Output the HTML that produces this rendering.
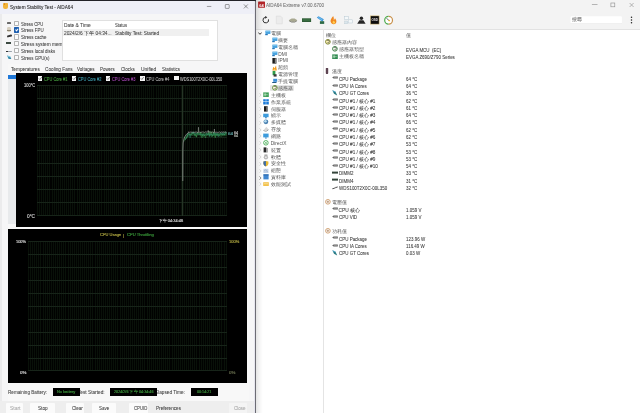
<!DOCTYPE html>
<html><head><meta charset="utf-8">
<style>
*{margin:0;padding:0;box-sizing:border-box}
html,body{width:640px;height:413px;overflow:hidden;background:#222228;font-family:"Liberation Sans",sans-serif}
.a{position:absolute}
.t{position:absolute;white-space:nowrap;line-height:1;color:#1b1b1b;-webkit-text-stroke:0.06px currentColor}
#lw{left:0;top:0;width:256px;height:413px;overflow:hidden;will-change:transform}
#rw{left:256px;top:0;width:384px;height:413px;background:#fff;overflow:hidden;will-change:transform}
.cb{position:absolute;width:5.1px;height:5.3px;border:0.5px solid #b4b4b4;background:#fbfbfb;border-radius:0.8px}
.gcb{position:absolute;width:4.3px;height:4.6px;background:#f4f4f4}
.gcb:after{content:"";position:absolute;left:1px;top:0.6px;width:1.6px;height:2.6px;border-right:0.7px solid #222;border-bottom:0.7px solid #222;transform:rotate(40deg)}
.l{font-size:4.7px}
.g{font-size:3.95px}
.gt{-webkit-text-stroke:0.16px currentColor}
.r{font-size:4.5px;color:#222}
.tr{font-size:4.6px;color:#262626}
.chev{position:absolute;width:2.2px;height:2.2px;border-right:0.7px solid #555;border-bottom:0.7px solid #555}
.chev.dn{transform:rotate(45deg);border-color:#222}
.chev.rt{transform:rotate(-45deg);border-color:#b8b8b8}
.ic{position:absolute;display:block;width:5.2px;height:5px}
.ic-pc{background:linear-gradient(#3a9ad8,#3a9ad8) 0.4px 0.2px/4.4px 3.2px no-repeat,linear-gradient(#5aaee0,#5aaee0) 0 3.4px/3px 1px no-repeat}
.ic-ipmi{background:#1c1c1c;width:4.3px;left:0;}
.ic-oc{background:linear-gradient(135deg,transparent 35%,#f39a1e 36%);}
.ic-pow{background:linear-gradient(#2f9a48,#2f9a48) 0.6px 0/3px 5.4px no-repeat,linear-gradient(#4a4a4a,#4a4a4a) 2px 4px/3px 1.3px no-repeat}
.ic-lap{background:linear-gradient(#3a8ad8,#3a8ad8) 1px 0.6px/4px 3px no-repeat,linear-gradient(#204060,#204060) 0 3.8px/5px 0.9px no-repeat}
.ic-sens,.ic-g1,.ic-g2,.ic-volt{border-radius:50%;border:1.1px solid #6a8a3a;background:#fdf6c8}
.ic-g1{border-color:#7a8a2a}
.ic-g2{border-color:#3a7a40}
.ic-volt{border-color:#c89060;background:#fff}
.ic-mb,.ic-mbg{background:#3f9e58;box-shadow:inset 0 0 0 0.5px #2a7a40}
.ic-mbg{background:linear-gradient(#fff,#fff) 2px 0/0.6px 5px no-repeat,linear-gradient(#fff,#fff) 0 2.5px/5px 0.5px no-repeat,#2f8a50}
.ic-os{background:linear-gradient(#1a78d8,#1a78d8) 0 0/2.4px 2.3px no-repeat,linear-gradient(#1a78d8,#1a78d8) 2.8px 0/2.4px 2.3px no-repeat,linear-gradient(#1a78d8,#1a78d8) 0 2.7px/2.4px 2.3px no-repeat,linear-gradient(#1a78d8,#1a78d8) 2.8px 2.7px/2.4px 2.3px no-repeat}
.ic-srv{background:linear-gradient(90deg,#555 0,#222 30%,#111 100%);width:3.8px;left:0}
.ic-disp{background:linear-gradient(#3a9ad8,#3a9ad8) 0 0.6px/5.2px 3.4px no-repeat,linear-gradient(#2070a8,#2070a8) 1.5px 4px/2.2px 0.8px no-repeat}
.ic-mm{border-radius:50%;background:radial-gradient(circle at 40% 40%,#8ac0e0,#3a6a98 70%)}
.ic-stor{background:linear-gradient(160deg,transparent 40%,#aaa 42%,#666 100%)}
.ic-net{background:linear-gradient(#3a9ad8,#3a9ad8) 0 0.5px/5.2px 3.6px no-repeat,linear-gradient(#2a80b8,#2a80b8) 1.8px 4px/1.6px 1px no-repeat}
.ic-dx{border-radius:50%;border:0.8px solid #3aa84a;background:radial-gradient(circle,#fff 40%,#7cc878 42%,#fff 60%)}
.ic-dev{background:linear-gradient(90deg,#333 0,#333 55%,#999 56%);width:4.6px}
.ic-sw{background:radial-gradient(circle at 50% 60%,#888 0,#aaa 40%,transparent 55%)}
.ic-sec{background:linear-gradient(90deg,#3a6aa8 50%,#e8b830 50%);border-radius:0.5px 0.5px 2.6px 2.6px}
.ic-cfg{background:linear-gradient(135deg,#c8d4e8,#9ab0cc)}
.ic-db{background:#3f86d0;box-shadow:inset 0 1px 0 #2a6ab0}
.ic-bench{background:linear-gradient(#f5c85a,#f0b838);height:4.2px;margin-top:0.6px}
.ic-therm{width:2.8px;background:linear-gradient(#5e4452,#5e4452) 0.2px 0.1px/2.4px 5.6px no-repeat;border-radius:1.2px;height:5.8px}
.ic-cpu{width:5.8px;background:linear-gradient(#5c5c5c,#5c5c5c) 1.2px 1.7px/4.6px 1.3px no-repeat;clip-path:polygon(0 2.35px,1.6px 1.4px,5.8px 1.4px,5.8px 3.3px,1.6px 3.3px)}
.ic-gt{width:4.6px;background:linear-gradient(135deg,#4aa8d8 0,#3a90c0 50%,#2a6a70 51%,#2a6a70 100%);clip-path:polygon(0 0,60% 20%,100% 100%,40% 85%)}
.ic-dimm{width:6.2px;background:linear-gradient(#33443a,#33443a) 0 1.4px/6.2px 2px no-repeat}
.ic-disk{width:6px;background:linear-gradient(-20deg,transparent 38%,#3a3a3a 40%,#3a3a3a 55%,transparent 57%)}
.btn{position:absolute;height:10px;background:#fbfbfb;border-radius:1px}
</style></head><body>
<div id="lw" class="a">
<div class="a" style="left:0.00px;top:1.20px;width:256.00px;height:411.80px;background:#f6f6f7;border-top-right-radius:2.5px"></div>
<div class="a" style="left:0.00px;top:1.20px;width:256.00px;height:13.10px;background:#eeeff7;border-top-right-radius:2.5px"></div>
<div class="a" style="left:0.00px;top:14.30px;width:1.50px;height:398.70px;background:#ebebec"></div>
<div class="a" style="left:3.20px;top:3.40px;width:4.60px;height:5.20px;background:#f2b43a;border-radius:0.8px 0.8px 2px 2px"></div>
<div class="a" style="left:3.60px;top:3.00px;width:1.60px;height:2.00px;background:#e08a20;border-radius:0.5px"></div>
<div class="t " style="left:9.70px;top:6.32px;font-size:4.8px;color:#1b1b1b;transform:scaleX(0.974);transform-origin:0 50%">System Stability Test - AIDA64</div>
<svg class="a" style="left:200px;top:0" width="56" height="14" viewBox="200 0 56 14"><path d="M206.9 6.45H211.3" stroke="#444" stroke-width="0.5"/><rect x="225.3" y="4.5" width="3.9" height="3.9" rx="0.5" fill="none" stroke="#444" stroke-width="0.5"/><path d="M243.9 4.4L247.9 8.4M247.9 4.4L243.9 8.4" stroke="#444" stroke-width="0.55"/></svg>
<div class="a" style="left:6.70px;top:22.40px;width:4.80px;height:1.40px;background:#6a6a6a;border-radius:0.6px"></div>
<div class="a" style="left:6.90px;top:27.20px;width:4.40px;height:4.40px;background:#d6cfc0;border-radius:1.4px"></div>
<div class="a" style="left:7.20px;top:30.40px;width:3.80px;height:1.00px;background:#8a8270"></div>
<div class="a" style="left:6.60px;top:35.20px;width:4.80px;height:1.70px;background:#333;transform:rotate(-14deg);border-radius:0.8px"></div>
<div class="a" style="left:6.20px;top:42.10px;width:4.90px;height:2.40px;background:#3c4a42"></div>
<div class="a" style="left:6.30px;top:50.90px;width:5.30px;height:1.50px;background:#9aa4ac;border-radius:0.6px"></div>
<div class="a" style="left:6.30px;top:51.10px;width:2.10px;height:1.40px;background:#333"></div>
<svg class="a" style="left:6.6px;top:54.6px" width="5" height="4.8" viewBox="0 0 5 4.8"><path d="M0.2 0.4 L3.2 1.4 L4.6 4.6 L1.4 3.8 Z" fill="#3a8aa8"/><path d="M0.2 0.4 L3.2 1.4 L3.6 2.4 L0.6 1.6 Z" fill="#8ad0e8"/></svg>
<div class="cb" style="left:14.3px;top:20.50px"></div>
<div class="t " style="left:20.80px;top:22.53px;font-size:4.75px;color:#404040;transform:scaleX(0.895);transform-origin:0 50%">Stress CPU</div>
<div class="cb" style="left:14.3px;top:27.40px;background:#1e5fb0;border-color:#1e5fb0"></div>
<div class="a" style="left:15.8px;top:28.10px;width:1.6px;height:2.7px;border-right:0.7px solid #fff;border-bottom:0.7px solid #fff;transform:rotate(40deg)"></div>
<div class="t " style="left:20.80px;top:29.43px;font-size:4.75px;color:#404040;transform:scaleX(0.930);transform-origin:0 50%">Stress FPU</div>
<div class="cb" style="left:14.3px;top:34.30px"></div>
<div class="t " style="left:20.80px;top:36.33px;font-size:4.75px;color:#404040;transform:scaleX(0.930);transform-origin:0 50%">Stress cache</div>
<div class="cb" style="left:14.3px;top:41.10px"></div>
<div class="t " style="left:20.80px;top:43.13px;font-size:4.75px;color:#404040">Stress system memory</div>
<div class="cb" style="left:14.3px;top:47.80px"></div>
<div class="t " style="left:20.80px;top:49.83px;font-size:4.75px;color:#404040;transform:scaleX(0.930);transform-origin:0 50%">Stress local disks</div>
<div class="cb" style="left:14.3px;top:54.70px"></div>
<div class="t " style="left:20.80px;top:56.73px;font-size:4.75px;color:#404040;transform:scaleX(0.930);transform-origin:0 50%">Stress GPU(s)</div>
<div class="a" style="left:61.90px;top:20.00px;width:156.00px;height:41.00px;background:#fff;border:0.5px solid #e0e0e0"></div>
<div class="a" style="left:62.50px;top:29.00px;width:146.90px;height:6.60px;background:#f0f0f0"></div>
<div class="t " style="left:63.80px;top:24.33px;font-size:4.75px;color:#404040;transform:scaleX(1.023);transform-origin:0 50%">Date &amp; Time</div>
<div class="t " style="left:115.00px;top:24.33px;font-size:4.75px;color:#404040;transform:scaleX(0.891);transform-origin:0 50%">Status</div>
<div class="t " style="left:63.80px;top:32.33px;font-size:4.75px;color:#404040;transform:scaleX(1.011);transform-origin:0 50%">2024/2/6 下午 04:34...</div>
<div class="t " style="left:114.70px;top:32.33px;font-size:4.75px;color:#404040;transform:scaleX(0.988);transform-origin:0 50%">Stability Test: Started</div>
<div class="a" style="left:7.50px;top:72.00px;width:241.00px;height:329.00px;background:#f8f8f8"></div>
<div class="a" style="left:8.00px;top:63.50px;width:34.50px;height:8.50px;background:#f8f8f8"></div>
<div class="t " style="left:10.50px;top:67.73px;font-size:4.75px;color:#404040;transform:scaleX(0.991);transform-origin:0 50%">Temperatures</div>
<div class="t " style="left:44.70px;top:67.73px;font-size:4.75px;color:#404040;transform:scaleX(0.990);transform-origin:0 50%">Cooling Fans</div>
<div class="t " style="left:77.30px;top:67.73px;font-size:4.75px;color:#404040;transform:scaleX(0.968);transform-origin:0 50%">Voltages</div>
<div class="t " style="left:100.00px;top:67.73px;font-size:4.75px;color:#404040;transform:scaleX(0.928);transform-origin:0 50%">Powers</div>
<div class="t " style="left:120.60px;top:67.73px;font-size:4.75px;color:#404040;transform:scaleX(0.961);transform-origin:0 50%">Clocks</div>
<div class="t " style="left:140.90px;top:67.73px;font-size:4.75px;color:#404040;transform:scaleX(1.035);transform-origin:0 50%">Unified</div>
<div class="t " style="left:161.60px;top:67.73px;font-size:4.75px;color:#404040;transform:scaleX(0.947);transform-origin:0 50%">Statistics</div>
<div class="a" style="left:7.70px;top:75.00px;width:8.80px;height:4.00px;background:#1f78d8"></div>
<div class="a" style="left:7.70px;top:79.00px;width:8.80px;height:144.50px;background:#e8eaec"></div>
<div class="a" style="left:16.00px;top:72.50px;width:231.40px;height:154.30px;background:#000"></div>
<div class="a" style="left:36.80px;top:85.00px;width:190.50px;height:130.50px;background:transparent;background:repeating-linear-gradient(to bottom,#172419 0,#172419 0.8px,transparent 0.8px,transparent 13.050px),repeating-linear-gradient(to right,#091109 0,#091109 1px,#010201 1px,#010201 2.08px)"></div>
<div class="a" style="left:36.80px;top:214.70px;width:190.50px;height:0.80px;background:#172419"></div>
<div class="a" style="left:182.30px;top:85.00px;width:0.80px;height:130.50px;background:#263426"></div>
<svg class="a" style="left:0;top:0" width="256" height="240" viewBox="0 0 256 240">
<path d="M183.8 140 Q185.5 134.5 189 133 L189.00 132.45 L189.90 132.91 L190.80 132.75 L191.70 132.08 L192.60 132.05 L193.50 132.10 L194.40 132.59 L195.30 132.17 L196.20 132.88 L197.10 132.81 L198.00 133.37 L198.90 133.20 L199.80 132.20 L200.70 132.43 L201.60 132.25 L202.50 132.89 L203.40 132.77 L204.30 132.08 L205.20 132.95 L206.10 132.44 L207.00 132.63 L207.90 133.11 L208.80 132.34 L209.70 132.74 L210.60 133.02 L211.50 133.37 L212.40 132.59 L213.30 132.21 L214.20 132.05 L215.10 133.07 L216.00 133.23 L216.90 132.97 L217.80 132.81 L218.70 133.18 L219.60 132.66 L220.50 132.08 L221.40 132.91 L222.30 133.15 L223.20 132.54 L224.10 132.03 L225.00 132.24 L225.90 132.08 L226.80 132.18 L226.80 135.54 L225.90 136.69 L225.00 135.26 L224.10 136.02 L223.20 136.47 L222.30 135.63 L221.40 137.18 L220.50 136.54 L219.60 136.46 L218.70 137.08 L217.80 136.00 L216.90 136.31 L216.00 135.69 L215.10 136.26 L214.20 136.47 L213.30 136.08 L212.40 136.67 L211.50 135.26 L210.60 135.63 L209.70 136.93 L208.80 136.26 L207.90 136.54 L207.00 135.66 L206.10 136.29 L205.20 135.94 L204.30 135.45 L203.40 135.14 L202.50 135.82 L201.60 136.28 L200.70 136.80 L199.80 135.26 L198.90 135.64 L198.00 135.10 L197.10 135.87 L196.20 137.08 L195.30 135.49 L194.40 136.82 L193.50 135.20 L192.60 135.95 L191.70 136.12 L190.80 135.80 L189.90 135.16 L189.00 135.33 L189 136.5 Q186 138 184.2 142 Z" fill="#2a6e3a" opacity="0.6"/>
<path d="M185 140 L187 136.5 L188.00 134.36 L188.70 133.68 L189.40 134.71 L190.10 135.30 L190.80 134.11 L191.50 134.29 L192.20 133.85 L192.90 133.00 L193.60 133.51 L194.30 134.31 L195.00 135.60 L195.70 134.63 L196.40 137.16 L197.10 134.37 L197.80 132.13 L198.50 133.74 L199.20 133.73 L199.90 134.68 L200.60 132.31 L201.30 136.35 L202.00 137.73 L202.70 134.53 L203.40 136.45 L204.10 134.55 L204.80 136.39 L205.50 137.86 L206.20 135.40 L206.90 134.07 L207.60 133.87 L208.30 134.67 L209.00 131.35 L209.70 135.30 L210.40 134.00 L211.10 131.44 L211.80 136.80 L212.50 135.56 L213.20 135.60 L213.90 131.91 L214.60 134.56 L215.30 137.70 L216.00 133.69 L216.70 135.50 L217.40 135.15 L218.10 133.89 L218.80 134.23 L219.50 135.64 L220.20 134.38 L220.90 133.55 L221.60 134.80 L222.30 134.94 L223.00 134.81 L223.70 134.03 L224.40 135.26 L225.10 133.73 L225.80 133.81 L226.50 133.93" fill="none" stroke="#3c9a50" stroke-width="0.6"/>
<path d="M185.5 139.5 L187.5 136 L188.00 133.26 L188.70 134.20 L189.40 133.85 L190.10 137.89 L190.80 134.52 L191.50 134.23 L192.20 132.57 L192.90 133.24 L193.60 131.77 L194.30 134.15 L195.00 134.31 L195.70 134.24 L196.40 132.85 L197.10 133.75 L197.80 134.22 L198.50 134.72 L199.20 134.09 L199.90 134.21 L200.60 134.59 L201.30 134.27 L202.00 135.08 L202.70 134.95 L203.40 133.72 L204.10 135.09 L204.80 135.51 L205.50 134.54 L206.20 133.63 L206.90 133.44 L207.60 135.08 L208.30 133.93 L209.00 133.47 L209.70 136.47 L210.40 134.54 L211.10 134.61 L211.80 134.01 L212.50 135.45 L213.20 134.31 L213.90 133.24 L214.60 134.45 L215.30 133.33 L216.00 134.78 L216.70 133.41 L217.40 133.28 L218.10 136.69 L218.80 134.55 L219.50 134.01 L220.20 134.23 L220.90 133.85 L221.60 132.84 L222.30 134.88 L223.00 132.64 L223.70 133.88 L224.40 135.05 L225.10 133.46 L225.80 131.73 L226.50 133.56" fill="none" stroke="#3aa08a" stroke-width="0.5" opacity="0.8"/>
<path d="M182.8 181 L182.9 150 L183.2 143 Q183.8 135.5 188.5 132.6 L188.00 132.28 L188.70 132.02 L189.40 132.30 L190.10 132.38 L190.80 131.92 L191.50 132.20 L192.20 132.21 L192.90 132.17 L193.60 132.29 L194.30 132.23 L195.00 132.48 L195.70 132.03 L196.40 132.02 L197.10 132.34 L197.80 132.49 L198.50 132.40 L199.20 132.28 L199.90 132.16 L200.60 132.30 L201.30 132.20 L202.00 132.26 L202.70 131.93 L203.40 132.06 L204.10 132.12 L204.80 132.49 L205.50 131.92 L206.20 132.03 L206.90 132.10 L207.60 132.07 L208.30 132.05 L209.00 131.95 L209.70 131.99 L210.40 132.14 L211.10 132.28 L211.80 132.47 L212.50 131.99 L213.20 132.37 L213.90 132.36 L214.60 132.20 L215.30 132.27 L216.00 132.39 L216.70 132.21 L217.40 132.32 L218.10 132.45 L218.80 132.24 L219.50 131.91 L220.20 132.38 L220.90 132.47 L221.60 131.95 L222.30 132.28 L223.00 132.13 L223.70 131.93 L224.40 132.22 L225.10 132.06 L225.80 131.94 L226.50 132.44" fill="none" stroke="#b8bcb8" stroke-width="0.6"/>
<path d="M198.3 132 L198.5 127.2 L198.7 132 M214.2 132 L214.4 129 L214.6 132 M208 132 L208.2 130.2 L208.4 132" fill="none" stroke="#a8aca8" stroke-width="0.45"/>
</svg>
<div class="a" style="left:37.9px;top:75.9px;width:4.5px;height:4.7px;background:#f4f4f4"></div>
<svg class="a" style="left:37.9px;top:75.9px" width="4.5" height="4.7" viewBox="0 0 4.5 4.7"><path d="M0.9 2.4L1.9 3.5L3.7 1.1" fill="none" stroke="#3a3a3a" stroke-width="0.6"/></svg>
<div class="t gt" style="left:44.00px;top:77.75px;font-size:4.6px;color:#48a040;transform:scaleX(0.859);transform-origin:0 50%;-webkit-text-stroke:0.08px #48a040">CPU Core #1</div>
<div class="a" style="left:71.7px;top:75.9px;width:4.5px;height:4.7px;background:#f4f4f4"></div>
<svg class="a" style="left:71.7px;top:75.9px" width="4.5" height="4.7" viewBox="0 0 4.5 4.7"><path d="M0.9 2.4L1.9 3.5L3.7 1.1" fill="none" stroke="#3a3a3a" stroke-width="0.6"/></svg>
<div class="t gt" style="left:78.10px;top:77.75px;font-size:4.6px;color:#40a0b0;transform:scaleX(0.859);transform-origin:0 50%;-webkit-text-stroke:0.08px #40a0b0">CPU Core #2</div>
<div class="a" style="left:105.89999999999999px;top:75.9px;width:4.5px;height:4.7px;background:#f4f4f4"></div>
<svg class="a" style="left:105.89999999999999px;top:75.9px" width="4.5" height="4.7" viewBox="0 0 4.5 4.7"><path d="M0.9 2.4L1.9 3.5L3.7 1.1" fill="none" stroke="#3a3a3a" stroke-width="0.6"/></svg>
<div class="t gt" style="left:112.40px;top:77.75px;font-size:4.6px;color:#a848b8;transform:scaleX(0.859);transform-origin:0 50%;-webkit-text-stroke:0.08px #a848b8">CPU Core #3</div>
<div class="a" style="left:140.20000000000002px;top:75.9px;width:4.5px;height:4.7px;background:#f4f4f4"></div>
<svg class="a" style="left:140.20000000000002px;top:75.9px" width="4.5" height="4.7" viewBox="0 0 4.5 4.7"><path d="M0.9 2.4L1.9 3.5L3.7 1.1" fill="none" stroke="#3a3a3a" stroke-width="0.6"/></svg>
<div class="t gt" style="left:146.00px;top:77.75px;font-size:4.6px;color:#b0b0b0;transform:scaleX(0.859);transform-origin:0 50%;-webkit-text-stroke:0.08px #b0b0b0">CPU Core #4</div>
<div class="a" style="left:174.30px;top:75.90px;width:4.30px;height:4.60px;background:#f4f4f4"></div>
<div class="t gt" style="left:179.80px;top:77.75px;font-size:4.6px;color:#c0c0c0;transform:scaleX(0.853);transform-origin:0 50%;-webkit-text-stroke:0.08px #c0c0c0">WDS100T2X0C-00L350</div>
<div class="t gt" style="left:23.70px;top:84.20px;font-size:4.6px;color:#c8c8c8;transform:scaleX(0.873);transform-origin:0 50%">100°C</div>
<div class="t gt" style="left:27.00px;top:214.55px;font-size:4.6px;color:#c8c8c8;transform:scaleX(1.036);transform-origin:0 50%">0°C</div>
<div class="t gt" style="left:158.60px;top:218.91px;font-size:4.2px;color:#d0d0d0;transform:scaleX(0.949);transform-origin:0 50%">下午 04:34:46</div>
<div class="t gt" style="left:228.10px;top:132.72px;font-size:3.4px;color:#5a9a9a;transform:scaleX(1.375);transform-origin:0 50%">64</div>
<div class="t gt" style="left:233.80px;top:131.55px;font-size:3.2px;color:#b8b8b8;transform:scaleX(1.180);transform-origin:0 50%">64</div>
<div class="t gt" style="left:233.80px;top:134.95px;font-size:3.2px;color:#a0a8a0;transform:scaleX(1.180);transform-origin:0 50%">64</div>
<div class="a" style="left:7.50px;top:228.50px;width:239.90px;height:154.30px;background:#000"></div>
<div class="a" style="left:28.00px;top:240.50px;width:199.30px;height:130.50px;background:transparent;background:repeating-linear-gradient(to bottom,#172419 0,#172419 0.8px,transparent 0.8px,transparent 13.050px),repeating-linear-gradient(to right,#091109 0,#091109 1px,#010201 1px,#010201 2.08px)"></div>
<div class="a" style="left:28.00px;top:370.20px;width:199.30px;height:0.80px;background:#172419"></div>
<div class="t gt" style="left:100.40px;top:233.49px;font-size:4.3px;color:#b0a840;transform:scaleX(0.929);transform-origin:0 50%">CPU Usage</div>
<div class="t gt" style="left:122.80px;top:233.54px;font-size:3.95px;color:#b0a840">|</div>
<div class="t gt" style="left:127.00px;top:233.49px;font-size:4.3px;color:#3a9a3a;transform:scaleX(0.950);transform-origin:0 50%">CPU Throttling</div>
<div class="t gt" style="left:16.20px;top:240.39px;font-size:4.3px;color:#d8d8d8;transform:scaleX(0.900);transform-origin:0 50%">100%</div>
<div class="t gt" style="left:229.00px;top:239.99px;font-size:4.3px;color:#b0a840;transform:scaleX(0.927);transform-origin:0 50%">100%</div>
<div class="t gt" style="left:19.90px;top:370.69px;font-size:4.3px;color:#d8d8d8;transform:scaleX(1.030);transform-origin:0 50%">0%</div>
<div class="t gt" style="left:229.00px;top:370.69px;font-size:4.3px;color:#6a7050;transform:scaleX(1.030);transform-origin:0 50%">0%</div>
<div class="t " style="left:7.70px;top:390.93px;font-size:4.75px;color:#404040;transform:scaleX(0.968);transform-origin:0 50%">Remaining Battery:</div>
<div class="t " style="left:77.60px;top:390.93px;font-size:4.75px;color:#404040;transform:scaleX(0.997);transform-origin:0 50%">Test Started:</div>
<div class="t " style="left:155.30px;top:390.93px;font-size:4.75px;color:#404040;transform:scaleX(0.995);transform-origin:0 50%">Elapsed Time:</div>
<div class="a" style="left:52.50px;top:387.80px;width:27.30px;height:7.80px;background:#000"></div>
<div class="t gt" style="left:56.90px;top:391.28px;font-size:3.7px;color:#3a923a;transform:scaleX(1.072);transform-origin:0 50%">No battery</div>
<div class="a" style="left:110.20px;top:387.80px;width:46.80px;height:7.80px;background:#000"></div>
<div class="t gt" style="left:114.20px;top:391.31px;font-size:3.5px;color:#3a923a;transform:scaleX(1.061);transform-origin:0 50%">2024/2/6 下午 04:34:46</div>
<div class="a" style="left:190.60px;top:387.80px;width:27.40px;height:7.80px;background:#000"></div>
<div class="t gt" style="left:197.10px;top:391.28px;font-size:3.7px;color:#3a923a;transform:scaleX(0.993);transform-origin:0 50%">00:14:21</div>
<div class="a" style="left:0.00px;top:400.50px;width:255.20px;height:12.50px;background:#eeeeee"></div>
<div class="a" style="left:6.40px;top:403.40px;width:16.60px;height:10.60px;background:#fbfbfb;border-radius:1px"></div>
<div class="a" style="left:30.00px;top:403.40px;width:25.00px;height:10.60px;background:#fbfbfb;border-radius:1px"></div>
<div class="a" style="left:65.80px;top:403.40px;width:18.70px;height:10.60px;background:#fbfbfb;border-radius:1px"></div>
<div class="a" style="left:92.30px;top:403.40px;width:24.20px;height:10.60px;background:#fbfbfb;border-radius:1px"></div>
<div class="a" style="left:128.90px;top:403.40px;width:19.50px;height:10.60px;background:#fbfbfb;border-radius:1px"></div>
<div class="a" style="left:228.80px;top:403.40px;width:18.70px;height:10.60px;background:#f4f4f4;border-radius:1px"></div>
<div class="t " style="left:9.60px;top:407.33px;font-size:4.75px;color:#a8a8a8;transform:scaleX(1.047);transform-origin:0 50%">Start</div>
<div class="t " style="left:37.50px;top:407.33px;font-size:4.75px;color:#404040;transform:scaleX(0.982);transform-origin:0 50%">Stop</div>
<div class="t " style="left:71.50px;top:407.33px;font-size:4.75px;color:#404040;transform:scaleX(0.951);transform-origin:0 50%">Clear</div>
<div class="t " style="left:99.00px;top:407.33px;font-size:4.75px;color:#404040;transform:scaleX(0.942);transform-origin:0 50%">Save</div>
<div class="t " style="left:133.60px;top:407.33px;font-size:4.75px;color:#404040;transform:scaleX(0.900);transform-origin:0 50%">CPUID</div>
<div class="t " style="left:155.50px;top:407.33px;font-size:4.75px;color:#404040;transform:scaleX(0.976);transform-origin:0 50%">Preferences</div>
<div class="t " style="left:234.00px;top:407.33px;font-size:4.75px;color:#a8a8a8;transform:scaleX(0.955);transform-origin:0 50%">Close</div>
<div class="a" style="left:254.40px;top:3.00px;width:0.80px;height:410.00px;background:#e6e6ee"></div>
<div class="a" style="left:255.00px;top:2.00px;width:1.00px;height:411.00px;background:#6c6c74"></div>
</div>
<div id="rw" class="a">
  <!-- title + toolbar -->
  <div class="a" style="left:0;top:0;width:384px;height:29px;background:#f3f3f3"></div>
  <div class="a" style="left:0;top:28.6px;width:384px;height:0.8px;background:#e2e2e2"></div>
  <svg class="a" style="left:0;top:0" width="384" height="29" viewBox="256 0 384 29">
    <!-- app icon -->
    <rect x="258.1" y="1.5" width="6.9" height="6.3" rx="0.6" fill="#b3262a"/>
    <text x="261.55" y="6.6" font-family="Liberation Sans" font-weight="bold" font-size="4" fill="#fff" text-anchor="middle">64</text>
    <!-- window controls -->
    <rect x="591.9" y="4.4" width="5.6" height="0.6" fill="#8a8a8a"/>
    <rect x="610.9" y="3.0" width="3.9" height="3.8" fill="none" stroke="#8a8a8a" stroke-width="0.6"/>
    <path d="M629.6 3L633.6 7M633.6 3L629.6 7" stroke="#8a8a8a" stroke-width="0.6"/>
    <!-- refresh -->
    <path d="M268.50 19.38 A2.8 2.8 0 1 1 265.50 17.30" fill="none" stroke="#262626" stroke-width="0.95"/>
    <path d="M265.2 15.9 L267.3 17.3 L265.2 18.7 Z" fill="#262626"/>
    <!-- doc -->
    <path d="M276.3 16.1 H280.6 L282.3 17.8 V23.8 H276.3 Z" fill="#ececec" stroke="#d6d6d6" stroke-width="0.5"/>
    <!-- chip -->
    <path d="M288.7 20.3 L291.6 18.6 H294.6 L297.4 20.3 L294.6 21.8 H291.6 Z" fill="#a8a890"/>
    <path d="M289.2 20.9 L291.6 22.1 H294.6 L296.9 20.9" fill="none" stroke="#4a4a40" stroke-width="0.6"/>
    <!-- ram -->
    <rect x="302" y="18.3" width="9.1" height="3.7" fill="#2e5c36"/>
    <rect x="302.8" y="19.4" width="7.5" height="1.2" fill="#3f7848"/>
    <!-- network -->
    <path d="M316.8 17.4 L318.6 16.2 L323.8 19.2 L322.4 21.8 Z" fill="#3b93d9"/><path d="M317.6 17.6 L318.8 16.9 L322.6 19.2 L321.8 20.4 Z" fill="#6ab8ea"/>
    <rect x="319.9" y="21.2" width="4.3" height="2.7" fill="#2d6a46"/>
    <!-- flame -->
    <path d="M333.2 16 C331 18.5 330.4 20 330.6 21.6 C330.9 23.3 332.2 24.2 333.6 24.2 C335.2 24.2 336.5 23 336.4 21.2 C336.3 19.8 335.4 19 335 18.2 C334.6 19.4 334.2 19.8 333.8 20 C334 18.6 333.8 17.2 333.2 16 Z" fill="#f08820"/>
    <path d="M333.5 20.6 C332.5 21.6 332.4 22.6 332.8 23.3 C333.3 24 334.6 23.9 335 23.1 C335.3 22.3 334.8 21.6 334.4 21.2 C334.2 21.7 333.9 21.8 333.5 20.6 Z" fill="#ffd050"/>
    <!-- light computers -->
    <rect x="344.3" y="16.4" width="4.2" height="3.2" fill="#f4f8fa" stroke="#b8c8d2" stroke-width="0.5"/>
    <rect x="348.2" y="19.8" width="4.2" height="3.2" fill="#f4f8fa" stroke="#b8c8d2" stroke-width="0.5"/>
    <rect x="344.8" y="21.0" width="3" height="2.8" fill="#dbe6ec" stroke="#b8c8d2" stroke-width="0.4"/>
    <!-- person -->
    <circle cx="361.4" cy="18.3" r="1.7" fill="#262626"/>
    <path d="M357.2 23.7 L359.4 20.2 H363.4 L365.6 23.7 Z" fill="#262626"/>
    <!-- osd -->
    <rect x="370.5" y="15.9" width="8.6" height="8.2" fill="#0c0c0c" stroke="#e0c070" stroke-width="0.5"/>
    <text x="374.8" y="21.1" font-family="Liberation Sans" font-weight="bold" font-size="3" fill="#e8e0e0" text-anchor="middle">OSD</text>
    <!-- gauge -->
    <circle cx="388.6" cy="20.2" r="3.9" fill="#fff"/>
    <path d="M388.6 16.3 A3.9 3.9 0 0 0 388.6 24.1" fill="none" stroke="#4aaa4a" stroke-width="1.2"/>
    <path d="M388.6 16.3 A3.9 3.9 0 0 1 388.6 24.1" fill="none" stroke="#c8904a" stroke-width="1.2"/>
    <path d="M386.6 18.2 L389.2 20.8" stroke="#333" stroke-width="0.8"/>
    <circle cx="389.2" cy="20.6" r="0.8" fill="#e8b830"/>
    <!-- search -->
    <rect x="570.6" y="16.2" width="51.3" height="7.6" rx="1" fill="#fff"/>
    <rect x="570.6" y="23.3" width="51.3" height="0.5" fill="#e4e4e4"/>
    <circle cx="631.5" cy="17.2" r="0.75" fill="#222"/>
    <circle cx="631.5" cy="20.0" r="0.75" fill="#222"/>
    <circle cx="631.5" cy="22.8" r="0.75" fill="#222"/>
  </svg>
  <div class="t" style="left:315.9px;top:17.6px;font-size:4.7px;color:#8a8a8a;-webkit-text-stroke:0.1px #8a8a8a">搜尋</div>
  <!-- splitter -->
  <div class="a" style="left:67.3px;top:29.4px;width:0.7px;height:384px;background:#e4e4e4"></div>

<div class="t " style="left:10.30px;top:4.35px;font-size:4.6px;color:#707070;transform:scaleX(0.998);transform-origin:0 50%">AIDA64 Extreme v7.00.6700</div>
<svg class="a" style="left:1.80px;top:31.96px" width="4" height="3" viewBox="0 0 4 3"><path d="M0.3 0.5L2 2.3L3.7 0.5" fill="none" stroke="#222" stroke-width="0.9"/></svg>
<svg class="a" style="left:8.90px;top:30.26px" width="6" height="6" viewBox="0 0 6 6"><path d="M0.4 0.6H5.4V3.9H0.4Z" fill="#3d9bdc"/><path d="M1 1.1H4.8V2.2H1Z" fill="#7cc6ef"/><path d="M0.2 4H2.8V5.2H0.2Z" fill="#2a78b8"/></svg>
<div class="t " style="left:15.00px;top:32.03px;font-size:4.8px;color:#555555;-webkit-text-stroke:0">電腦</div>
<svg class="a" style="left:16.00px;top:37.12px" width="6" height="6" viewBox="0 0 6 6"><path d="M0.4 0.6H5.4V3.9H0.4Z" fill="#3d9bdc"/><path d="M1 1.1H4.8V2.2H1Z" fill="#7cc6ef"/><path d="M0.2 4H2.8V5.2H0.2Z" fill="#2a78b8"/></svg>
<div class="t " style="left:22.20px;top:38.89px;font-size:4.8px;color:#555555;-webkit-text-stroke:0">摘要</div>
<svg class="a" style="left:16.00px;top:43.98px" width="6" height="6" viewBox="0 0 6 6"><path d="M0.4 0.6H5.4V3.9H0.4Z" fill="#3d9bdc"/><path d="M1 1.1H4.8V2.2H1Z" fill="#7cc6ef"/><path d="M0.2 4H2.8V5.2H0.2Z" fill="#2a78b8"/></svg>
<div class="t " style="left:22.20px;top:45.76px;font-size:4.8px;color:#555555;-webkit-text-stroke:0">電腦名稱</div>
<svg class="a" style="left:16.00px;top:50.85px" width="6" height="6" viewBox="0 0 6 6"><path d="M0.4 0.6H5.4V3.9H0.4Z" fill="#3d9bdc"/><path d="M1 1.1H4.8V2.2H1Z" fill="#7cc6ef"/><path d="M0.2 4H2.8V5.2H0.2Z" fill="#2a78b8"/></svg>
<div class="t " style="left:22.20px;top:52.62px;font-size:4.8px;color:#555555;-webkit-text-stroke:0">DMI</div>
<svg class="a" style="left:16.00px;top:57.71px" width="6" height="6" viewBox="0 0 6 6"><path d="M0.4 0H4.4V5.6H0.4Z" fill="#1a1a1a"/><path d="M2.8 0.3H4.2V5.3H2.8Z" fill="#888"/></svg>
<div class="t " style="left:22.20px;top:59.48px;font-size:4.8px;color:#555555;-webkit-text-stroke:0">IPMI</div>
<svg class="a" style="left:16.00px;top:64.57px" width="6" height="6" viewBox="0 0 6 6"><path d="M0.4 5.4L1.2 1.8L2.6 3.2L4 0.4L4.8 5.4Z" fill="#f39a1e"/><path d="M1.5 5L2.3 3.6L3.3 4.4L3.8 5Z" fill="#ffd060"/></svg>
<div class="t " style="left:22.20px;top:66.34px;font-size:4.8px;color:#555555;-webkit-text-stroke:0">超頻</div>
<svg class="a" style="left:16.00px;top:71.43px" width="6" height="6" viewBox="0 0 6 6"><path d="M0.6 0H3.4V4.2H0.6Z" fill="#2f9a48"/><path d="M1.6 3.2H4.6V5.6H1.6Z" fill="#3a3a3a"/></svg>
<div class="t " style="left:22.20px;top:73.20px;font-size:4.8px;color:#555555;-webkit-text-stroke:0">電源管理</div>
<svg class="a" style="left:16.00px;top:78.29px" width="6" height="6" viewBox="0 0 6 6"><path d="M1.2 0.8H5.2V3.8H1.2Z" fill="#3b8fd9"/><path d="M0 3.9H4.8L4.2 5H0.4Z" fill="#235a8a"/></svg>
<div class="t " style="left:22.20px;top:80.07px;font-size:4.8px;color:#555555;-webkit-text-stroke:0">手提電腦</div>
<div class="a" style="left:14.30px;top:84.96px;width:23.50px;height:6.10px;background:#e6e6e6;border-radius:1px"></div>
<svg class="a" style="left:16.00px;top:85.16px" width="6" height="6" viewBox="0 0 6 6"><circle cx="2.9" cy="2.8" r="2.35" fill="#fffbe0" stroke="#5e8a38" stroke-width="0.95"/><path d="M2 1.9A1.2 1.2 0 1 1 2.4 3.6" fill="none" stroke="#333" stroke-width="0.6"/></svg>
<div class="t " style="left:22.20px;top:86.93px;font-size:4.8px;color:#555555;-webkit-text-stroke:0">感應器</div>
<svg class="a" style="left:2.50px;top:93.22px" width="3" height="4" viewBox="0 0 3 4"><path d="M0.5 0.4L2.1 2L0.5 3.6" fill="none" stroke="#c4c4c4" stroke-width="0.6"/></svg>
<svg class="a" style="left:7.30px;top:92.02px" width="6" height="6" viewBox="0 0 6 6"><path d="M0.2 0.4H5.8V5H0.2Z" fill="#3f9e58"/><path d="M1.2 1.2V4.2M2.6 1.2V4.2M1.2 2.7H4.8" stroke="#d8f0d8" stroke-width="0.5"/></svg>
<div class="t " style="left:14.70px;top:93.79px;font-size:4.8px;color:#555555;-webkit-text-stroke:0">主機板</div>
<svg class="a" style="left:2.50px;top:100.08px" width="3" height="4" viewBox="0 0 3 4"><path d="M0.5 0.4L2.1 2L0.5 3.6" fill="none" stroke="#c4c4c4" stroke-width="0.6"/></svg>
<svg class="a" style="left:7.30px;top:98.88px" width="6" height="6" viewBox="0 0 6 6"><path d="M0.2 0.2H2.8V2.6H0.2ZM3.2 0.2H5.8V2.6H3.2ZM0.2 3H2.8V5.4H0.2ZM3.2 3H5.8V5.4H3.2Z" fill="#1a7ad8"/></svg>
<div class="t " style="left:14.70px;top:100.65px;font-size:4.8px;color:#555555;-webkit-text-stroke:0">作業系統</div>
<svg class="a" style="left:2.50px;top:106.94px" width="3" height="4" viewBox="0 0 3 4"><path d="M0.5 0.4L2.1 2L0.5 3.6" fill="none" stroke="#c4c4c4" stroke-width="0.6"/></svg>
<svg class="a" style="left:7.30px;top:105.74px" width="6" height="6" viewBox="0 0 6 6"><path d="M1 0.2H4.6V5.6H1Z" fill="#1a1a1a"/><path d="M3.4 0.4H4.4V5.4H3.4Z" fill="#9a9a9a"/></svg>
<div class="t " style="left:14.70px;top:107.51px;font-size:4.8px;color:#555555;-webkit-text-stroke:0">伺服器</div>
<svg class="a" style="left:2.50px;top:113.80px" width="3" height="4" viewBox="0 0 3 4"><path d="M0.5 0.4L2.1 2L0.5 3.6" fill="none" stroke="#c4c4c4" stroke-width="0.6"/></svg>
<svg class="a" style="left:7.30px;top:112.60px" width="6" height="6" viewBox="0 0 6 6"><path d="M0.2 0.7H5.6V4.2H0.2Z" fill="#3d9bdc"/><path d="M2 4.2H3.8V5.2H2Z" fill="#2a78b8"/></svg>
<div class="t " style="left:14.70px;top:114.38px;font-size:4.8px;color:#555555;-webkit-text-stroke:0">顯示</div>
<svg class="a" style="left:2.50px;top:120.67px" width="3" height="4" viewBox="0 0 3 4"><path d="M0.5 0.4L2.1 2L0.5 3.6" fill="none" stroke="#c4c4c4" stroke-width="0.6"/></svg>
<svg class="a" style="left:7.30px;top:119.47px" width="6" height="6" viewBox="0 0 6 6"><circle cx="2.9" cy="2.8" r="2.4" fill="#4a80b0"/><circle cx="2.4" cy="2.3" r="1.3" fill="#b8dcf0"/></svg>
<div class="t " style="left:14.70px;top:121.24px;font-size:4.8px;color:#555555;-webkit-text-stroke:0">多媒體</div>
<svg class="a" style="left:2.50px;top:127.53px" width="3" height="4" viewBox="0 0 3 4"><path d="M0.5 0.4L2.1 2L0.5 3.6" fill="none" stroke="#c4c4c4" stroke-width="0.6"/></svg>
<svg class="a" style="left:7.30px;top:126.33px" width="6" height="6" viewBox="0 0 6 6"><path d="M0.4 4.2L3.4 0.8L5.4 3.2L3 5.4Z" fill="#d8d8d8"/><path d="M0.4 4.2L3 5.4L5.4 3.2L5.4 4L3 5.8L0.4 4.8Z" fill="#555"/></svg>
<div class="t " style="left:14.70px;top:128.10px;font-size:4.8px;color:#555555;-webkit-text-stroke:0">存放</div>
<svg class="a" style="left:2.50px;top:134.39px" width="3" height="4" viewBox="0 0 3 4"><path d="M0.5 0.4L2.1 2L0.5 3.6" fill="none" stroke="#c4c4c4" stroke-width="0.6"/></svg>
<svg class="a" style="left:7.30px;top:133.19px" width="6" height="6" viewBox="0 0 6 6"><path d="M0.2 0.6H5.6V4.4H0.2Z" fill="#3d9bdc"/><path d="M2.1 4.4H3.7V5.4H2.1Z" fill="#2a78b8"/></svg>
<div class="t " style="left:14.70px;top:134.96px;font-size:4.8px;color:#555555;-webkit-text-stroke:0">網路</div>
<svg class="a" style="left:2.50px;top:141.25px" width="3" height="4" viewBox="0 0 3 4"><path d="M0.5 0.4L2.1 2L0.5 3.6" fill="none" stroke="#c4c4c4" stroke-width="0.6"/></svg>
<svg class="a" style="left:7.30px;top:140.05px" width="6" height="6" viewBox="0 0 6 6"><circle cx="2.9" cy="2.8" r="2.3" fill="#fff" stroke="#3aa84a" stroke-width="0.8"/><path d="M1.6 1.5L4.2 4.1M4.2 1.5L1.6 4.1" stroke="#3aa84a" stroke-width="0.6"/></svg>
<div class="t " style="left:14.70px;top:141.82px;font-size:4.8px;color:#555555;-webkit-text-stroke:0">DirectX</div>
<svg class="a" style="left:2.50px;top:148.11px" width="3" height="4" viewBox="0 0 3 4"><path d="M0.5 0.4L2.1 2L0.5 3.6" fill="none" stroke="#c4c4c4" stroke-width="0.6"/></svg>
<svg class="a" style="left:7.30px;top:146.91px" width="6" height="6" viewBox="0 0 6 6"><path d="M0.6 0.4H3.4V5.4H0.6Z" fill="#2a2a2a"/><path d="M3.4 1H5H4.8V5.4H3.4Z" fill="#9a9a9a"/></svg>
<div class="t " style="left:14.70px;top:148.69px;font-size:4.8px;color:#555555;-webkit-text-stroke:0">裝置</div>
<svg class="a" style="left:2.50px;top:154.98px" width="3" height="4" viewBox="0 0 3 4"><path d="M0.5 0.4L2.1 2L0.5 3.6" fill="none" stroke="#c4c4c4" stroke-width="0.6"/></svg>
<svg class="a" style="left:7.30px;top:153.78px" width="6" height="6" viewBox="0 0 6 6"><circle cx="2.9" cy="3.2" r="2.2" fill="#bbb"/><circle cx="2.9" cy="3.2" r="0.8" fill="#fff"/><path d="M1.4 0.6H4.4V1.4H1.4Z" fill="#888"/></svg>
<div class="t " style="left:14.70px;top:155.55px;font-size:4.8px;color:#555555;-webkit-text-stroke:0">軟體</div>
<svg class="a" style="left:2.50px;top:161.84px" width="3" height="4" viewBox="0 0 3 4"><path d="M0.5 0.4L2.1 2L0.5 3.6" fill="none" stroke="#c4c4c4" stroke-width="0.6"/></svg>
<svg class="a" style="left:7.30px;top:160.64px" width="6" height="6" viewBox="0 0 6 6"><path d="M0.4 0.6L2.9 0L5.4 0.6V2.6C5.4 4.2 4 5.2 2.9 5.6C1.8 5.2 0.4 4.2 0.4 2.6Z" fill="#e8b830"/><path d="M2.9 0V5.6C1.8 5.2 0.4 4.2 0.4 2.6V0.6Z" fill="#3a6aa8"/></svg>
<div class="t " style="left:14.70px;top:162.41px;font-size:4.8px;color:#555555;-webkit-text-stroke:0">安全性</div>
<svg class="a" style="left:2.50px;top:168.70px" width="3" height="4" viewBox="0 0 3 4"><path d="M0.5 0.4L2.1 2L0.5 3.6" fill="none" stroke="#c4c4c4" stroke-width="0.6"/></svg>
<svg class="a" style="left:7.30px;top:167.50px" width="6" height="6" viewBox="0 0 6 6"><path d="M0.4 0.8H5.4V5H0.4Z" fill="#c4d2e6"/><path d="M1 3.2L2.6 1.6L4.8 4.2" fill="none" stroke="#8aa0c0" stroke-width="0.5"/></svg>
<div class="t " style="left:14.70px;top:169.27px;font-size:4.8px;color:#555555;-webkit-text-stroke:0">組態</div>
<svg class="a" style="left:2.50px;top:175.56px" width="3" height="4" viewBox="0 0 3 4"><path d="M0.5 0.4L2.1 2L0.5 3.6" fill="none" stroke="#444" stroke-width="0.6"/></svg>
<svg class="a" style="left:7.30px;top:174.36px" width="6" height="6" viewBox="0 0 6 6"><path d="M0.4 0.4H5.6V5.4H0.4Z" fill="#3f86d0"/><path d="M0.4 0.4H5.6V1.4H0.4Z" fill="#2a64a8"/></svg>
<div class="t " style="left:14.70px;top:176.13px;font-size:4.8px;color:#555555;-webkit-text-stroke:0">資料庫</div>
<svg class="a" style="left:2.50px;top:182.42px" width="3" height="4" viewBox="0 0 3 4"><path d="M0.5 0.4L2.1 2L0.5 3.6" fill="none" stroke="#c4c4c4" stroke-width="0.6"/></svg>
<svg class="a" style="left:7.30px;top:181.22px" width="6" height="6" viewBox="0 0 6 6"><path d="M0.2 1.2H5.8V5H0.2Z" fill="#f2c04a"/><path d="M1 2.4H5V3.2H1Z" fill="#fbe4a0"/></svg>
<div class="t " style="left:14.70px;top:183.00px;font-size:4.8px;color:#555555;-webkit-text-stroke:0">效能測試</div>
<div class="t " style="left:70.00px;top:33.66px;font-size:4.8px;color:#555555;-webkit-text-stroke:0">欄位</div>
<div class="t " style="left:150.25px;top:33.66px;font-size:4.8px;color:#555555;-webkit-text-stroke:0">值</div>
<svg class="a" style="left:69.40px;top:39.16px" width="6" height="6" viewBox="0 0 6 6"><circle cx="2.9" cy="2.8" r="2.35" fill="#fff6b8" stroke="#7a8030" stroke-width="0.95"/><path d="M2 1.9A1.2 1.2 0 1 1 2.4 3.6" fill="none" stroke="#333" stroke-width="0.6"/></svg>
<div class="t " style="left:76.40px;top:40.93px;font-size:4.8px;color:#555555;-webkit-text-stroke:0">感應器內容</div>
<svg class="a" style="left:76.30px;top:46.42px" width="6" height="6" viewBox="0 0 6 6"><circle cx="2.9" cy="2.8" r="2.35" fill="#f0f8e8" stroke="#3a7a44" stroke-width="0.95"/><path d="M2 1.9A1.2 1.2 0 1 1 2.4 3.6" fill="none" stroke="#333" stroke-width="0.6"/></svg>
<div class="t " style="left:82.60px;top:48.19px;font-size:4.8px;color:#555555;-webkit-text-stroke:0">感應器類型</div>
<div class="t " style="left:150.25px;top:48.84px;font-size:4.8px;color:#3a3a3a;transform:scaleX(0.930);transform-origin:0 50%">EVGA MCU  (EC)</div>
<svg class="a" style="left:76.30px;top:53.69px" width="6" height="6" viewBox="0 0 6 6"><path d="M0.2 0.4H5.8V5H0.2Z" fill="#2f8a50"/><path d="M1.2 1.2V4.2M2.6 1.2V4.2M1.2 2.7H4.8" stroke="#e0f4e0" stroke-width="0.5"/></svg>
<div class="t " style="left:82.60px;top:55.46px;font-size:4.8px;color:#555555;-webkit-text-stroke:0">主機板名稱</div>
<div class="t " style="left:150.25px;top:56.11px;font-size:4.8px;color:#3a3a3a;transform:scaleX(0.930);transform-origin:0 50%">EVGA Z690/Z790 Series</div>
<svg class="a" style="left:69.40px;top:68.21px" width="6" height="6" viewBox="0 0 6 6"><path d="M0.8 0.8A1.2 1.2 0 0 1 3.2 0.8V5A1.2 1.2 0 0 1 0.8 5Z" fill="#5e4452"/></svg>
<div class="t " style="left:76.40px;top:69.99px;font-size:4.8px;color:#555555;-webkit-text-stroke:0">溫度</div>
<svg class="a" style="left:76.30px;top:75.48px" width="6" height="6" viewBox="0 0 6 6"><path d="M0.2 2.5L1.6 1.6H5.8V3.4H1.6Z" fill="#5e5e5e"/><path d="M1.8 2.2H5.4V2.8H1.8Z" fill="#a8a8a8"/></svg>
<div class="t " style="left:82.60px;top:77.90px;font-size:4.8px;color:#3a3a3a;transform:scaleX(0.930);transform-origin:0 50%">CPU Package</div>
<div class="t " style="left:150.25px;top:77.90px;font-size:4.8px;color:#3a3a3a;transform:scaleX(0.930);transform-origin:0 50%">64 °C</div>
<svg class="a" style="left:76.30px;top:82.74px" width="6" height="6" viewBox="0 0 6 6"><path d="M0.2 2.5L1.6 1.6H5.8V3.4H1.6Z" fill="#5e5e5e"/><path d="M1.8 2.2H5.4V2.8H1.8Z" fill="#a8a8a8"/></svg>
<div class="t " style="left:82.60px;top:85.17px;font-size:4.8px;color:#3a3a3a;transform:scaleX(0.930);transform-origin:0 50%">CPU IA Cores</div>
<div class="t " style="left:150.25px;top:85.17px;font-size:4.8px;color:#3a3a3a;transform:scaleX(0.930);transform-origin:0 50%">64 °C</div>
<svg class="a" style="left:76.30px;top:90.01px" width="6" height="6" viewBox="0 0 6 6"><path d="M0.4 0.2L3.6 1.8L5.2 5.4L2 3.8Z" fill="#2a7a80"/><path d="M0.4 0.2L3.6 1.8L3.9 2.6L0.8 1.2Z" fill="#5ab4e0"/></svg>
<div class="t " style="left:82.60px;top:92.43px;font-size:4.8px;color:#3a3a3a;transform:scaleX(0.930);transform-origin:0 50%">CPU GT Cores</div>
<div class="t " style="left:150.25px;top:92.43px;font-size:4.8px;color:#3a3a3a;transform:scaleX(0.930);transform-origin:0 50%">36 °C</div>
<svg class="a" style="left:76.30px;top:97.27px" width="6" height="6" viewBox="0 0 6 6"><path d="M0.2 2.5L1.6 1.6H5.8V3.4H1.6Z" fill="#5e5e5e"/><path d="M1.8 2.2H5.4V2.8H1.8Z" fill="#a8a8a8"/></svg>
<div class="t " style="left:82.60px;top:99.70px;font-size:4.8px;color:#3a3a3a;transform:scaleX(0.970);transform-origin:0 50%">CPU #1 / 核心 #1</div>
<div class="t " style="left:150.25px;top:99.70px;font-size:4.8px;color:#3a3a3a;transform:scaleX(0.930);transform-origin:0 50%">62 °C</div>
<svg class="a" style="left:76.30px;top:104.54px" width="6" height="6" viewBox="0 0 6 6"><path d="M0.2 2.5L1.6 1.6H5.8V3.4H1.6Z" fill="#5e5e5e"/><path d="M1.8 2.2H5.4V2.8H1.8Z" fill="#a8a8a8"/></svg>
<div class="t " style="left:82.60px;top:106.96px;font-size:4.8px;color:#3a3a3a;transform:scaleX(0.970);transform-origin:0 50%">CPU #1 / 核心 #2</div>
<div class="t " style="left:150.25px;top:106.96px;font-size:4.8px;color:#3a3a3a;transform:scaleX(0.930);transform-origin:0 50%">61 °C</div>
<svg class="a" style="left:76.30px;top:111.80px" width="6" height="6" viewBox="0 0 6 6"><path d="M0.2 2.5L1.6 1.6H5.8V3.4H1.6Z" fill="#5e5e5e"/><path d="M1.8 2.2H5.4V2.8H1.8Z" fill="#a8a8a8"/></svg>
<div class="t " style="left:82.60px;top:114.23px;font-size:4.8px;color:#3a3a3a;transform:scaleX(0.970);transform-origin:0 50%">CPU #1 / 核心 #3</div>
<div class="t " style="left:150.25px;top:114.23px;font-size:4.8px;color:#3a3a3a;transform:scaleX(0.930);transform-origin:0 50%">64 °C</div>
<svg class="a" style="left:76.30px;top:119.07px" width="6" height="6" viewBox="0 0 6 6"><path d="M0.2 2.5L1.6 1.6H5.8V3.4H1.6Z" fill="#5e5e5e"/><path d="M1.8 2.2H5.4V2.8H1.8Z" fill="#a8a8a8"/></svg>
<div class="t " style="left:82.60px;top:121.49px;font-size:4.8px;color:#3a3a3a;transform:scaleX(0.970);transform-origin:0 50%">CPU #1 / 核心 #4</div>
<div class="t " style="left:150.25px;top:121.49px;font-size:4.8px;color:#3a3a3a;transform:scaleX(0.930);transform-origin:0 50%">66 °C</div>
<svg class="a" style="left:76.30px;top:126.33px" width="6" height="6" viewBox="0 0 6 6"><path d="M0.2 2.5L1.6 1.6H5.8V3.4H1.6Z" fill="#5e5e5e"/><path d="M1.8 2.2H5.4V2.8H1.8Z" fill="#a8a8a8"/></svg>
<div class="t " style="left:82.60px;top:128.76px;font-size:4.8px;color:#3a3a3a;transform:scaleX(0.970);transform-origin:0 50%">CPU #1 / 核心 #5</div>
<div class="t " style="left:150.25px;top:128.76px;font-size:4.8px;color:#3a3a3a;transform:scaleX(0.930);transform-origin:0 50%">62 °C</div>
<svg class="a" style="left:76.30px;top:133.60px" width="6" height="6" viewBox="0 0 6 6"><path d="M0.2 2.5L1.6 1.6H5.8V3.4H1.6Z" fill="#5e5e5e"/><path d="M1.8 2.2H5.4V2.8H1.8Z" fill="#a8a8a8"/></svg>
<div class="t " style="left:82.60px;top:136.02px;font-size:4.8px;color:#3a3a3a;transform:scaleX(0.970);transform-origin:0 50%">CPU #1 / 核心 #6</div>
<div class="t " style="left:150.25px;top:136.02px;font-size:4.8px;color:#3a3a3a;transform:scaleX(0.930);transform-origin:0 50%">62 °C</div>
<svg class="a" style="left:76.30px;top:140.86px" width="6" height="6" viewBox="0 0 6 6"><path d="M0.2 2.5L1.6 1.6H5.8V3.4H1.6Z" fill="#5e5e5e"/><path d="M1.8 2.2H5.4V2.8H1.8Z" fill="#a8a8a8"/></svg>
<div class="t " style="left:82.60px;top:143.29px;font-size:4.8px;color:#3a3a3a;transform:scaleX(0.970);transform-origin:0 50%">CPU #1 / 核心 #7</div>
<div class="t " style="left:150.25px;top:143.29px;font-size:4.8px;color:#3a3a3a;transform:scaleX(0.930);transform-origin:0 50%">53 °C</div>
<svg class="a" style="left:76.30px;top:148.13px" width="6" height="6" viewBox="0 0 6 6"><path d="M0.2 2.5L1.6 1.6H5.8V3.4H1.6Z" fill="#5e5e5e"/><path d="M1.8 2.2H5.4V2.8H1.8Z" fill="#a8a8a8"/></svg>
<div class="t " style="left:82.60px;top:150.55px;font-size:4.8px;color:#3a3a3a;transform:scaleX(0.970);transform-origin:0 50%">CPU #1 / 核心 #8</div>
<div class="t " style="left:150.25px;top:150.55px;font-size:4.8px;color:#3a3a3a;transform:scaleX(0.930);transform-origin:0 50%">53 °C</div>
<svg class="a" style="left:76.30px;top:155.39px" width="6" height="6" viewBox="0 0 6 6"><path d="M0.2 2.5L1.6 1.6H5.8V3.4H1.6Z" fill="#5e5e5e"/><path d="M1.8 2.2H5.4V2.8H1.8Z" fill="#a8a8a8"/></svg>
<div class="t " style="left:82.60px;top:157.82px;font-size:4.8px;color:#3a3a3a;transform:scaleX(0.970);transform-origin:0 50%">CPU #1 / 核心 #9</div>
<div class="t " style="left:150.25px;top:157.82px;font-size:4.8px;color:#3a3a3a;transform:scaleX(0.930);transform-origin:0 50%">53 °C</div>
<svg class="a" style="left:76.30px;top:162.66px" width="6" height="6" viewBox="0 0 6 6"><path d="M0.2 2.5L1.6 1.6H5.8V3.4H1.6Z" fill="#5e5e5e"/><path d="M1.8 2.2H5.4V2.8H1.8Z" fill="#a8a8a8"/></svg>
<div class="t " style="left:82.60px;top:165.08px;font-size:4.8px;color:#3a3a3a;transform:scaleX(0.967);transform-origin:0 50%">CPU #1 / 核心 #10</div>
<div class="t " style="left:150.25px;top:165.08px;font-size:4.8px;color:#3a3a3a;transform:scaleX(0.930);transform-origin:0 50%">54 °C</div>
<svg class="a" style="left:76.30px;top:169.92px" width="6" height="6" viewBox="0 0 6 6"><path d="M0 1.6H6.2V3.6H0Z" fill="#33443a"/></svg>
<div class="t " style="left:82.60px;top:172.35px;font-size:4.8px;color:#3a3a3a;transform:scaleX(0.930);transform-origin:0 50%">DIMM2</div>
<div class="t " style="left:150.25px;top:172.35px;font-size:4.8px;color:#3a3a3a;transform:scaleX(0.930);transform-origin:0 50%">33 °C</div>
<svg class="a" style="left:76.30px;top:177.19px" width="6" height="6" viewBox="0 0 6 6"><path d="M0 1.6H6.2V3.6H0Z" fill="#33443a"/></svg>
<div class="t " style="left:82.60px;top:179.61px;font-size:4.8px;color:#3a3a3a;transform:scaleX(0.930);transform-origin:0 50%">DIMM4</div>
<div class="t " style="left:150.25px;top:179.61px;font-size:4.8px;color:#3a3a3a;transform:scaleX(0.930);transform-origin:0 50%">31 °C</div>
<svg class="a" style="left:76.30px;top:184.45px" width="6" height="6" viewBox="0 0 6 6"><path d="M0.2 4.4L5.8 2.4V3.2L0.6 5.2Z" fill="#3a3a3a"/><path d="M2.4 3.2L5.8 2L5.8 2.4L2.4 3.6Z" fill="#bbb"/></svg>
<div class="t " style="left:82.60px;top:186.88px;font-size:4.8px;color:#3a3a3a;transform:scaleX(0.930);transform-origin:0 50%">WDS100T2X0C-00L350</div>
<div class="t " style="left:150.25px;top:186.88px;font-size:4.8px;color:#3a3a3a;transform:scaleX(0.930);transform-origin:0 50%">32 °C</div>
<svg class="a" style="left:69.40px;top:198.98px" width="6" height="6" viewBox="0 0 6 6"><circle cx="2.9" cy="2.8" r="2.35" fill="#fff" stroke="#c8905a" stroke-width="0.8"/><path d="M1.6 2.8H4.2M2.9 1.5V4.1" stroke="#9a6a40" stroke-width="0.6"/></svg>
<div class="t " style="left:76.40px;top:200.76px;font-size:4.8px;color:#555555;-webkit-text-stroke:0">電壓值</div>
<svg class="a" style="left:76.30px;top:206.25px" width="6" height="6" viewBox="0 0 6 6"><path d="M0.2 2.5L1.6 1.6H5.8V3.4H1.6Z" fill="#5e5e5e"/><path d="M1.8 2.2H5.4V2.8H1.8Z" fill="#a8a8a8"/></svg>
<div class="t " style="left:82.60px;top:208.67px;font-size:4.8px;color:#3a3a3a;transform:scaleX(1.000);transform-origin:0 50%">CPU 核心</div>
<div class="t " style="left:150.25px;top:208.67px;font-size:4.8px;color:#3a3a3a;transform:scaleX(0.930);transform-origin:0 50%">1.059 V</div>
<svg class="a" style="left:76.30px;top:213.51px" width="6" height="6" viewBox="0 0 6 6"><path d="M0.2 2.5L1.6 1.6H5.8V3.4H1.6Z" fill="#5e5e5e"/><path d="M1.8 2.2H5.4V2.8H1.8Z" fill="#a8a8a8"/></svg>
<div class="t " style="left:82.60px;top:215.94px;font-size:4.8px;color:#3a3a3a;transform:scaleX(0.930);transform-origin:0 50%">CPU VID</div>
<div class="t " style="left:150.25px;top:215.94px;font-size:4.8px;color:#3a3a3a;transform:scaleX(0.930);transform-origin:0 50%">1.059 V</div>
<svg class="a" style="left:69.40px;top:228.04px" width="6" height="6" viewBox="0 0 6 6"><circle cx="2.9" cy="2.8" r="2.35" fill="#fff" stroke="#c8905a" stroke-width="0.8"/><path d="M1.6 2.8H4.2M2.9 1.5V4.1" stroke="#9a6a40" stroke-width="0.6"/></svg>
<div class="t " style="left:76.40px;top:229.82px;font-size:4.8px;color:#555555;-webkit-text-stroke:0">功耗值</div>
<svg class="a" style="left:76.30px;top:235.31px" width="6" height="6" viewBox="0 0 6 6"><path d="M0.2 2.5L1.6 1.6H5.8V3.4H1.6Z" fill="#5e5e5e"/><path d="M1.8 2.2H5.4V2.8H1.8Z" fill="#a8a8a8"/></svg>
<div class="t " style="left:82.60px;top:237.73px;font-size:4.8px;color:#3a3a3a;transform:scaleX(0.930);transform-origin:0 50%">CPU Package</div>
<div class="t " style="left:150.25px;top:237.73px;font-size:4.8px;color:#3a3a3a;transform:scaleX(0.930);transform-origin:0 50%">123.96 W</div>
<svg class="a" style="left:76.30px;top:242.57px" width="6" height="6" viewBox="0 0 6 6"><path d="M0.2 2.5L1.6 1.6H5.8V3.4H1.6Z" fill="#5e5e5e"/><path d="M1.8 2.2H5.4V2.8H1.8Z" fill="#a8a8a8"/></svg>
<div class="t " style="left:82.60px;top:245.00px;font-size:4.8px;color:#3a3a3a;transform:scaleX(0.930);transform-origin:0 50%">CPU IA Cores</div>
<div class="t " style="left:150.25px;top:245.00px;font-size:4.8px;color:#3a3a3a;transform:scaleX(0.930);transform-origin:0 50%">116.49 W</div>
<svg class="a" style="left:76.30px;top:249.84px" width="6" height="6" viewBox="0 0 6 6"><path d="M0.4 0.2L3.6 1.8L5.2 5.4L2 3.8Z" fill="#2a7a80"/><path d="M0.4 0.2L3.6 1.8L3.9 2.6L0.8 1.2Z" fill="#5ab4e0"/></svg>
<div class="t " style="left:82.60px;top:252.26px;font-size:4.8px;color:#3a3a3a;transform:scaleX(0.930);transform-origin:0 50%">CPU GT Cores</div>
<div class="t " style="left:150.25px;top:252.26px;font-size:4.8px;color:#3a3a3a;transform:scaleX(0.930);transform-origin:0 50%">0.03 W</div>
<div class="a" style="left:0;top:0;width:7px;height:413px;background:linear-gradient(to right,rgba(0,0,0,0.10),rgba(0,0,0,0.03) 60%,rgba(0,0,0,0))"></div>
</div>
</body></html>
